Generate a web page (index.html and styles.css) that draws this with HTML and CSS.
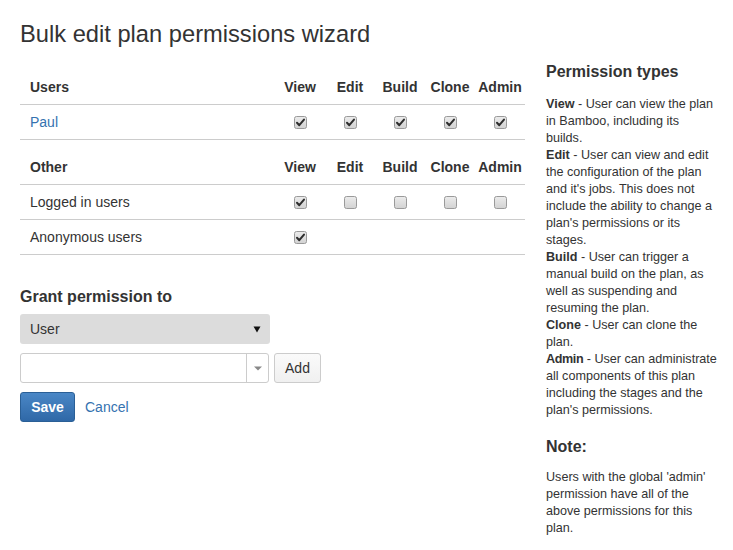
FILE: index.html
```html
<!DOCTYPE html>
<html>
<head>
<meta charset="utf-8">
<link rel="stylesheet" href="styles.css">
</head>
<body>
<h1 class="title">Bulk edit plan permissions wizard</h1>
<div class="layout">
  <div class="main">
    <table class="perm">
      <tr class="head"><th class="name">Users</th><th class="c">View</th><th class="c">Edit</th><th class="c">Build</th><th class="c">Clone</th><th class="c">Admin</th></tr>
      <tr>
        <td class="name"><a class="link" href="#">Paul</a></td>
        <td class="c"><svg class="cb" viewBox="0 0 13 13"><use href="#on"/></svg></td>
        <td class="c"><svg class="cb" viewBox="0 0 13 13"><use href="#on"/></svg></td>
        <td class="c"><svg class="cb" viewBox="0 0 13 13"><use href="#on"/></svg></td>
        <td class="c"><svg class="cb" viewBox="0 0 13 13"><use href="#on"/></svg></td>
        <td class="c"><svg class="cb" viewBox="0 0 13 13"><use href="#on"/></svg></td>
      </tr>
    </table>
    <table class="perm second">
      <tr class="head"><th class="name">Other</th><th class="c">View</th><th class="c">Edit</th><th class="c">Build</th><th class="c">Clone</th><th class="c">Admin</th></tr>
      <tr>
        <td class="name">Logged in users</td>
        <td class="c"><svg class="cb" viewBox="0 0 13 13"><use href="#on"/></svg></td>
        <td class="c"><svg class="cb" viewBox="0 0 13 13"><use href="#off"/></svg></td>
        <td class="c"><svg class="cb" viewBox="0 0 13 13"><use href="#off"/></svg></td>
        <td class="c"><svg class="cb" viewBox="0 0 13 13"><use href="#off"/></svg></td>
        <td class="c"><svg class="cb" viewBox="0 0 13 13"><use href="#off"/></svg></td>
      </tr>
      <tr>
        <td class="name">Anonymous users</td>
        <td class="c"><svg class="cb" viewBox="0 0 13 13"><use href="#on"/></svg></td>
        <td class="c"></td><td class="c"></td><td class="c"></td><td class="c"></td>
      </tr>
    </table>

    <h3 class="grant">Grant permission to</h3>
    <div class="select"><span>User</span><svg class="sel-arrow" viewBox="0 0 8 8"><path d="M0.5 1.5 H7.5 L4 7.5 Z" fill="#111"/></svg></div>
    <div class="row">
      <div class="combo">
        <div class="combo-input"></div>
        <div class="combo-btn"><svg class="combo-arrow" viewBox="0 0 8 5"><path d="M0 0.5 H8 L4 4.5 Z" fill="#888"/></svg></div>
      </div>
      <button class="btn">Add</button>
    </div>
    <div class="actions">
      <button class="btn-primary">Save</button>
      <a class="link cancel" href="#">Cancel</a>
    </div>
  </div>

  <div class="side">
    <h4 class="side-head">Permission types</h4>
    <p class="side-text"><b>View</b> - User can view the plan in Bamboo, including its builds.<br><b>Edit</b> - User can view and edit the configuration of the plan and it's jobs. This does not include the ability to change a plan's permissions or its stages.<br><b>Build</b> - User can trigger a manual build on the plan, as well as suspending and resuming the plan.<br><b>Clone</b> - User can clone the plan.<br><b class="tight">Admin</b> - User can administrate all components of this plan including the stages and the plan's permissions.</p>
    <h4 class="side-head note">Note:</h4>
    <p class="side-text">Users with the global 'admin' permission have all of the above permissions for this plan.</p>
  </div>
</div>

<svg class="defs" width="0" height="0">
  <defs>
    <linearGradient id="g" x1="0" y1="0" x2="0" y2="1">
      <stop offset="0" stop-color="#ececec"/>
      <stop offset="1" stop-color="#d2d2d2"/>
    </linearGradient>
    <g id="off"><rect x="0.5" y="0.5" width="12" height="12" rx="2" fill="url(#g)" stroke="#9a9a9a"/></g>
    <g id="on"><rect x="0.5" y="0.5" width="12" height="12" rx="2" fill="url(#g)" stroke="#9a9a9a"/><path d="M3 6.8 L5.3 9.2 L10 3.6" fill="none" stroke="#2e2e2e" stroke-width="2" stroke-linecap="round" stroke-linejoin="round"/></g>
  </defs>
</svg>
</body>
</html>
```

FILE: styles.css
```css
* { box-sizing: border-box; }
html, body { margin: 0; padding: 0; background: #fff; }
body {
  padding: 0 20px;
  font-family: "Liberation Sans", Arial, sans-serif;
  font-size: 14px;
  line-height: 20px;
  color: #333;
}
.defs { position: absolute; width: 0; height: 0; }
.title {
  margin: 21px 0 15px;
  font-size: 23.7px;
  font-weight: normal;
  line-height: 26px;
  color: #333;
}
.layout { display: flex; gap: 21px; align-items: flex-start; }
.main { width: 505px; flex: none; }
.side { width: 172px; flex: none; }

.perm { width: 100%; border-collapse: collapse; margin-top: 8px; }
.perm.second { margin-top: 10px; }
.perm th, .perm td {
  padding: 7px 0;
  line-height: 20px;
  border-bottom: 1px solid #ccc;
  vertical-align: middle;
}
.perm th { font-weight: bold; }
.perm .name { text-align: left; padding-left: 10px; }
.perm .c { width: 50px; text-align: center; }
.cb { width: 13px; height: 13px; display: block; margin: 0 auto; }
.perm td.c { height: 35px; }

.link { color: #3572b0; text-decoration: none; }

.grant {
  margin: 32px 0 7px;
  font-size: 16px;
  line-height: 20px;
  font-weight: bold;
}
.select {
  width: 250px;
  height: 30px;
  background: #dcdcdc;
  border-radius: 3px;
  display: flex;
  align-items: center;
  justify-content: space-between;
  padding: 0 9px 0 10px;
}
.sel-arrow { width: 8px; height: 8px; }
.row { display: flex; gap: 5px; margin-top: 9px; }
.combo {
  width: 249px;
  height: 30px;
  border: 1px solid #ccc;
  border-radius: 3px;
  display: flex;
  background: #fff;
}
.combo-input { flex: 1; }
.combo-btn {
  width: 22px;
  border-left: 1px solid #ccc;
  display: flex;
  align-items: center;
  justify-content: center;
}
.combo-arrow { width: 8px; height: 5px; }
.btn {
  height: 30px;
  width: 47px;
  border: 1px solid #ccc;
  border-radius: 3px;
  background: linear-gradient(#fafafa, #f0f0f0);
  font-family: inherit;
  font-size: 14px;
  color: #333;
  padding: 0;
}
.actions { display: flex; align-items: center; gap: 10px; margin-top: 9px; }
.btn-primary {
  height: 30px;
  width: 55px;
  border: 1px solid #2a5f96;
  border-radius: 3px;
  background: linear-gradient(#4a87c6, #2f68a7);
  color: #fff;
  font-family: inherit;
  font-size: 14px;
  font-weight: bold;
  padding: 0;
}
.cancel { font-size: 14px; }

.side-head {
  margin: 0 0 14px;
  font-size: 16px;
  line-height: 20px;
  font-weight: bold;
}
.side-head.note { margin-top: 18px; margin-bottom: 12px; }
.side-text {
  margin: 0;
  font-size: 12.6px;
  line-height: 17px;
}
.side-text b { font-weight: bold; }
.side-text b.tight { letter-spacing: -0.4px; }
```
